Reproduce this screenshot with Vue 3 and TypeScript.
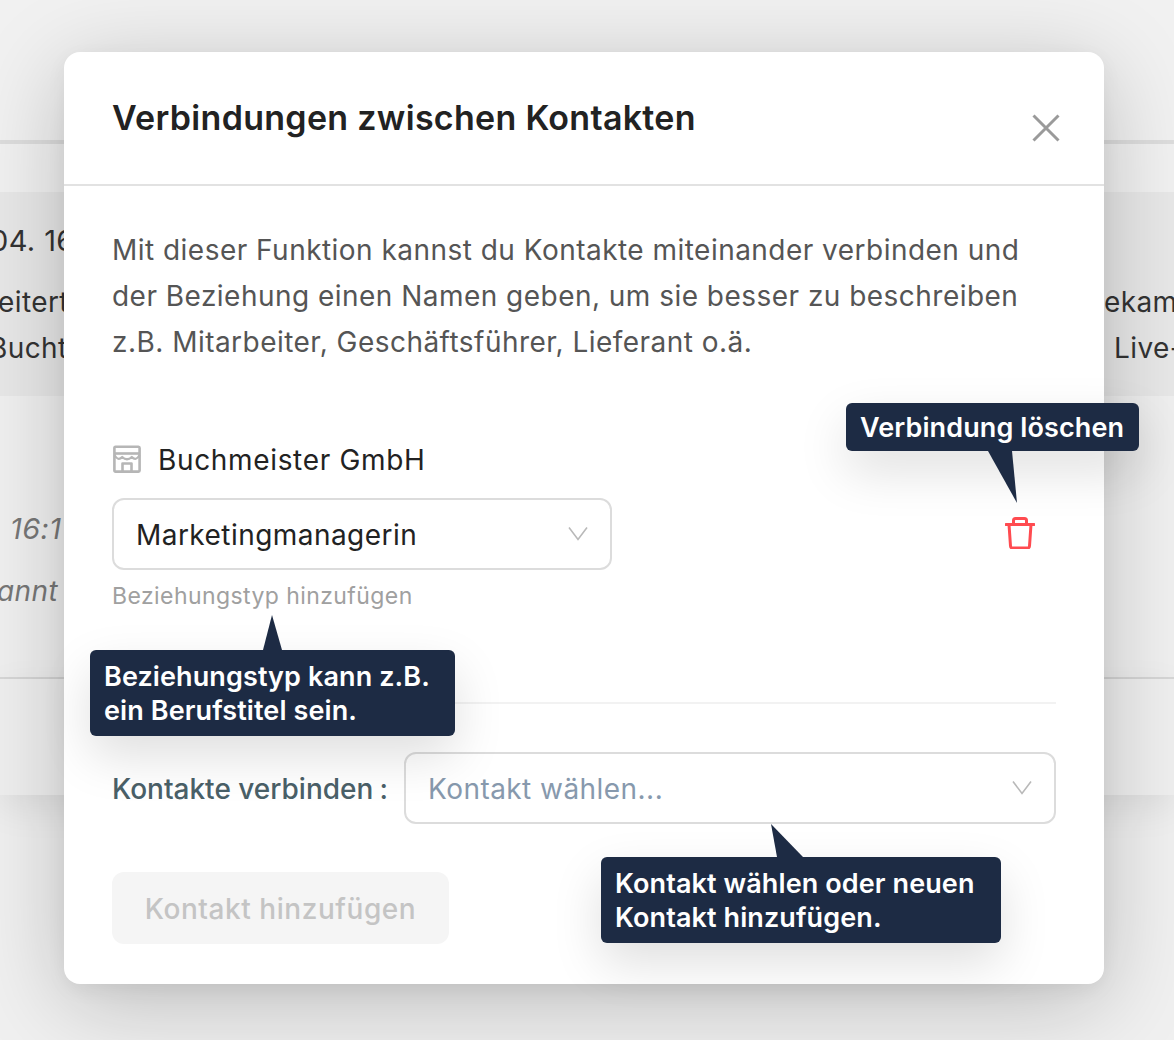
<script setup lang="ts">
const paragraph = [
  'Mit dieser Funktion kannst du Kontakte miteinander verbinden und',
  'der Beziehung einen Namen geben, um sie besser zu beschreiben',
  'z.B. Mitarbeiter, Geschäftsführer, Lieferant o.ä.',
]
</script>

<template>
  <div class="page">
    <div class="behind" aria-hidden="true">
      <div class="b-top"></div>
      <div class="b-gap"></div>
      <div class="b-card">
        <div class="b-col b-left">
          <div class="b-date">04. 16</div>
          <div class="b-line b-eitert">eitert</div>
          <div class="b-line b-bucht">Bucht</div>
        </div>
        <div class="b-col b-right">
          <div class="b-date">&nbsp;</div>
          <div class="b-line b-ekam">ekam</div>
          <div class="b-line b-live">Live-</div>
        </div>
      </div>
      <div class="b-notes">
        <div class="b-time">16:1</div>
        <div class="b-annt">annt</div>
      </div>
      <div class="b-footer"></div>
    </div>

    <section class="modal">
      <header class="modal-head">
        <h1 class="title">Verbindungen zwischen Kontakten</h1>
        <svg class="close" width="28" height="28" viewBox="0 0 28 28" fill="none">
          <path d="M1.5 1.5 L26.5 26.5 M26.5 1.5 L1.5 26.5" stroke="#9a9a9a" stroke-width="3" />
        </svg>
      </header>

      <div class="modal-body">
        <p class="intro">
          <span v-for="line in paragraph" :key="line" class="intro-line">{{ line }}</span>
        </p>

        <div class="company">
          <svg class="shop" width="28" height="28" viewBox="0 0 28 28" fill="none" stroke="#b6b6b6" stroke-width="2.6" stroke-linejoin="round">
            <path d="M2.5 1.8 H25.5 Q26.6 1.8 26.6 3 V25.5 Q26.6 26.6 25.5 26.6 H2.5 Q1.4 26.6 1.4 25.5 V3 Q1.4 1.8 2.5 1.8 Z" />
            <path d="M1.4 8.5 H26.6" />
            <path d="M1.4 10 Q5 16.5 9.2 12 Q14 16.5 18.8 12 Q23 16.5 26.6 10" stroke-width="2.2" />
            <path d="M9.5 26.6 V18.5 H18.5 V26.6" />
          </svg>
          <span class="company-name">Buchmeister GmbH</span>
        </div>

        <div class="relation">
          <div class="select rel-select">
            <span class="select-value">Marketingmanagerin</span>
            <svg class="chev" width="20" height="15" viewBox="0 0 20 15" fill="none">
              <path d="M1 1.5 L10 13.5 L19 1.5" stroke="#b9b9b9" stroke-width="1.6" />
            </svg>
          </div>
          <svg class="trash" width="30" height="32" viewBox="0 0 30 32" fill="none" stroke="#ff4b50" stroke-width="3" stroke-linejoin="round">
            <path d="M1 7.5 H29" stroke-linecap="round" />
            <path d="M4 7.5 L5.5 29 Q5.6 31 7.5 31 H22.5 Q24.4 31 24.5 29 L26 7.5" />
            <path d="M8.5 7.5 V3.5 Q8.5 1.5 10.5 1.5 H19.5 Q21.5 1.5 21.5 3.5 V7.5" />
          </svg>
        </div>
        <div class="hint">Beziehungstyp hinzufügen</div>

        <div class="divider"></div>

        <div class="connect">
          <label class="connect-label">Kontakte verbinden<span class="colon">:</span></label>
          <div class="select connect-select">
            <span class="select-placeholder">Kontakt wählen...</span>
            <svg class="chev" width="20" height="15" viewBox="0 0 20 15" fill="none">
              <path d="M1 1.5 L10 13.5 L19 1.5" stroke="#b9b9b9" stroke-width="1.6" />
            </svg>
          </div>
        </div>

        <button class="add" type="button" disabled>Kontakt hinzufügen</button>
      </div>

      <div class="tip tip-delete">
        Verbindung löschen
        <svg class="arrow arrow-delete" width="30" height="53" viewBox="0 0 30 53"><path d="M0 0 H24 L29 52 Z" fill="#1d2b44" /></svg>
      </div>
      <div class="tip tip-type">
        Beziehungstyp kann z.B.<br />ein Berufstitel sein.
        <svg class="arrow arrow-type" width="19" height="35" viewBox="0 0 19 35"><path d="M0 35 L9 0 L19 35 Z" fill="#1d2b44" /></svg>
      </div>
      <div class="tip tip-contact">
        Kontakt wählen oder neuen<br />Kontakt hinzufügen.
        <svg class="arrow arrow-contact" width="33" height="33" viewBox="0 0 33 33"><path d="M6 33 L0 0 L32 33 Z" fill="#1d2b44" /></svg>
      </div>
    </section>
  </div>
</template>

<style>
html, body { margin: 0; background: #ededed; }
</style>

<style scoped>
.page {
  position: relative;
  width: 1174px;
  height: 1040px;
  overflow: hidden;
  background: #f0f0f0;
  padding: 52px 70px 56px 64px;
  box-sizing: border-box;
  font-family: Inter, "Liberation Sans", sans-serif;
}
.behind {
  position: absolute;
  inset: 0;
  display: flex;
  flex-direction: column;
  color: #333;
}
.b-top { box-sizing: border-box; height: 144px; background: #f1f1f1; border-bottom: 4px solid #dddddd; }
.b-gap { height: 48px; background: #f1f1f1; }
.b-card {
  height: 204px;
  background: #e8e8e8;
  display: flex;
  justify-content: space-between;
  box-sizing: border-box;
  padding-top: 26px;
  font-size: 28px;
  letter-spacing: 0.4px;
  line-height: 46px;
}
.b-col { white-space: nowrap; }
.b-left { margin-left: -13px; }
.b-date { margin-bottom: 15px; margin-left: 3px; font-size: 29px; }
.b-eitert { margin-left: 11px; }
.b-bucht { margin-left: 2px; }
.b-right { width: 70px; }
.b-ekam { margin-left: 0; }
.b-live { margin-left: 10px; }
.b-notes {
  height: 283px;
  box-sizing: border-box;
  background: #f0f0f0;
  border-bottom: 2px solid #d9d9d9;
  padding-top: 113px;
  color: #777;
  font-style: italic;
  font-size: 28px;
  letter-spacing: 0.4px;
  white-space: nowrap;
}
.b-time { margin-left: 10px; line-height: 40px; font-size: 29px; }
.b-annt { margin-left: -3px; margin-top: 22px; line-height: 40px; }
.b-footer {
  height: 116px;
  background: #efefef;
  box-shadow: 0 12px 36px rgba(0, 0, 0, 0.08);
}

.modal {
  position: relative;
  width: 1040px;
  height: 932px;
  background: #fff;
  border-radius: 16px;
  box-shadow: 0 18px 90px rgba(0, 0, 0, 0.22), 0 6px 20px rgba(0, 0, 0, 0.05);
}
.modal-head {
  height: 134px;
  box-sizing: border-box;
  border-bottom: 2px solid #e2e2e2;
  padding: 44px 44px 0 48px;
  display: flex;
  justify-content: space-between;
  align-items: flex-start;
}
.title {
  margin: 0;
  font-size: 34px;
  letter-spacing: 0.3px;
  line-height: 44px;
  font-weight: 600;
  color: #222;
}
.close { margin-top: 18px; }
.modal-body { padding: 41px 48px 0; }
.intro { margin: 0; font-size: 28px; letter-spacing: 0.47px; line-height: 46px; color: #555; }
.intro-line { display: block; white-space: nowrap; }
.company {
  margin-top: 72px;
  height: 44px;
  display: flex;
  align-items: center;
  gap: 17px;
  font-size: 28px;
  letter-spacing: 0.66px;
  color: #222;
}
.company-name { padding-top: 2px; }
.shop { flex: none; margin-left: 1px; }
.relation {
  margin-top: 17px;
  display: flex;
  justify-content: space-between;
  align-items: center;
}
.select {
  box-sizing: border-box;
  height: 72px;
  border: 2px solid #dcdcdc;
  border-radius: 12px;
  padding: 2px 22px 0 22px;
  display: flex;
  align-items: center;
  justify-content: space-between;
  font-size: 28px;
  letter-spacing: 0.45px;
}
.rel-select { width: 500px; }
.select-value { color: #222; }
.select-placeholder { color: #8799ad; }
.chev { flex: none; margin-top: -4px; }
.trash { margin-right: 21px; margin-top: -2px; }
.hint { margin-top: 12px; font-size: 23px; letter-spacing: 0.42px; line-height: 28px; color: #a0a0a0; }
.divider { margin-top: 92px; height: 2px; background: #f2f2f2; }
.connect { margin-top: 48px; display: flex; align-items: center; gap: 16px; }
.connect-label { flex: none; padding-top: 2px; font-size: 28px; font-weight: 500; color: #4a6068; width: 276px; white-space: nowrap; }
.colon { margin-left: 6px; }
.connect-select { flex: 1; }
.add {
  display: block;
  margin-top: 48px;
  width: 337px;
  height: 72px;
  border: 0;
  border-radius: 12px;
  background: #f5f5f5;
  color: #c4c4c4;
  font: 500 28px Inter, "Liberation Sans", sans-serif;
  letter-spacing: 0.55px;
  padding: 2px 0 0;
}

.tip {
  position: absolute;
  box-sizing: border-box;
  background: #1d2b44;
  color: #fff;
  border-radius: 6px;
  font-size: 27px;
  font-weight: 600;
  letter-spacing: 0.1px;
  line-height: 34px;
  padding: 10px 14px;
  white-space: nowrap;
  box-shadow: 0 20px 50px rgba(0, 0, 0, 0.13);
}
.tip-delete { left: 782px; top: 351px; width: 293px; height: 48px; padding-top: 8px; }
.tip-type { left: 26px; top: 598px; width: 365px; height: 86px; }
.tip-contact { left: 537px; top: 805px; width: 400px; height: 86px; }
.arrow { position: absolute; display: block; }
.arrow-delete { left: 142px; top: 48px; }
.arrow-type { left: 173px; top: -35px; }
.arrow-contact { left: 170px; top: -33px; }
</style>
